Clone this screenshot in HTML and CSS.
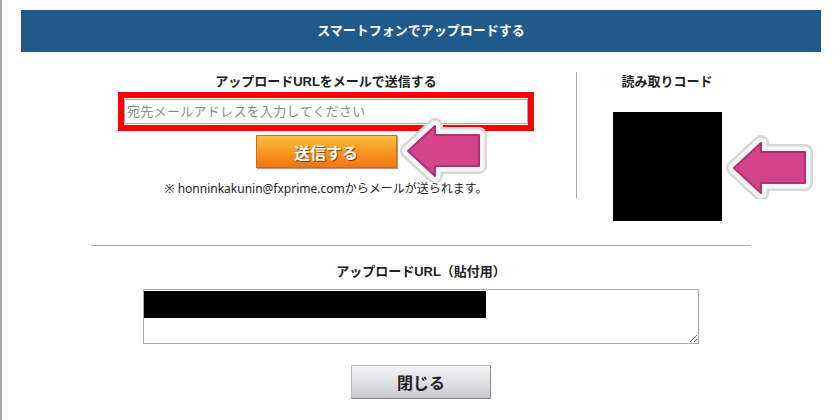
FILE: index.html
```html
<!DOCTYPE html>
<html lang="ja">

<head>
    <meta charset="UTF-8">
    <meta name="viewport" content="width=device-width, initial-scale=1.0">
    <title>スマートフォンでアップロードする</title>
    <link rel="stylesheet" href="styles.css">
</head>

<body>
    <div class="page">
        <div class="panel">
            <div class="panel-header">スマートフォンでアップロードする</div>

            <div class="upload-row">
                <div class="mail-col">
                    <div class="col-title">アップロードURLをメールで送信する</div>
                    <div class="mail-box">
                        <input type="text" class="mail-input" placeholder="宛先メールアドレスを入力してください">
                    </div>
                    <button class="send-btn">送信する</button>
                    <div class="mail-note">※ honninkakunin@fxprime.comからメールが送られます。</div>
                    <svg class="arrow arrow-send" width="88" height="64" viewBox="0 0 88 64">
                        <path d="M8 33 L35 8 L35 17 L79 17 L79 48 L35 48 L35 58 Z" fill="none" stroke="#d6d6d8" stroke-width="16" stroke-linejoin="round"/>
                        <path d="M8 33 L35 8 L35 17 L79 17 L79 48 L35 48 L35 58 Z" fill="none" stroke="#f7f7f7" stroke-width="11" stroke-linejoin="round"/>
                        <path d="M8 33 L35 8 L35 17 L79 17 L79 48 L35 48 L35 58 Z" fill="#d4448a" stroke="#b2306f" stroke-width="2" stroke-linejoin="round"/>
                    </svg>
                </div>

                <div class="qr-col">
                    <div class="col-title">読み取りコード</div>
                    <div class="qr-code"></div>
                    <svg class="arrow arrow-qr" width="88" height="64" viewBox="0 0 88 64">
                        <path d="M8 33 L35 8 L35 17 L79 17 L79 48 L35 48 L35 58 Z" fill="none" stroke="#d6d6d8" stroke-width="16" stroke-linejoin="round"/>
                        <path d="M8 33 L35 8 L35 17 L79 17 L79 48 L35 48 L35 58 Z" fill="none" stroke="#f7f7f7" stroke-width="11" stroke-linejoin="round"/>
                        <path d="M8 33 L35 8 L35 17 L79 17 L79 48 L35 48 L35 58 Z" fill="#d4448a" stroke="#b2306f" stroke-width="2" stroke-linejoin="round"/>
                    </svg>
                </div>
            </div>

            <div class="divider"></div>

            <div class="col-title url-title">アップロードURL（貼付用）</div>
            <div class="url-box">
                <textarea class="url-text" readonly></textarea>
                <div class="url-mask"></div>
            </div>

            <button class="close-btn">閉じる</button>
        </div>
    </div>
</body>

</html>
```

FILE: styles.css
```css
body {
    margin: 0;
    font-family: "Liberation Sans", "Noto Sans CJK JP", sans-serif;
    color: #222;
    background: #fff;
}

.page {
    border-left: 2px solid #a9a9a9;
    padding: 10px 19px 0;
    height: 410px;
}

.panel {
    width: 800px;
}

.panel-header {
    height: 42px;
    line-height: 42px;
    background-color: #1f5a8b;
    color: #fff;
    font-size: 13px;
    font-weight: bold;
    text-align: center;
}

.upload-row {
    display: flex;
    align-items: flex-start;
    padding-left: 55px;
    margin-top: 20px;
}

.col-title {
    font-size: 13px;
    font-weight: bold;
    line-height: 20px;
    text-align: center;
}

.mail-col {
    position: relative;
    width: 500px;
    border-right: 1px solid #a9a9a9;
    display: flex;
    flex-direction: column;
    align-items: center;
}

.mail-box {
    width: 404px;
    border: 6px solid #ff0000;
    padding: 1px 0;
}

.mail-input {
    display: block;
    box-sizing: border-box;
    width: 100%;
    height: 25px;
    margin: 0;
    padding: 0 2px;
    border: 1px solid #a9a9a9;
    font-family: "Liberation Sans", "Noto Sans CJK JP", sans-serif;
    font-size: 13px;
    letter-spacing: 0.3px;
}

.mail-input::placeholder {
    color: #8a8a8a;
}

.send-btn {
    width: 141px;
    height: 33px;
    margin-top: 4px;
    border: 1px solid #d46a12;
    background: linear-gradient(#fcc03f, #f7941f 55%, #f07510);
    color: #fff;
    font-family: "Noto Sans CJK JP", sans-serif;
    font-size: 16px;
    font-weight: bold;
    text-shadow: 1px 1px 1px #7a3a08;
    box-shadow: 1px 1px 1px #b0a090;
    cursor: pointer;
}

.mail-note {
    margin-top: 12px;
    font-family: "Noto Sans", "Noto Sans CJK JP", sans-serif;
    font-size: 12px;
    line-height: 18px;
    color: #222;
}

.qr-col {
    position: relative;
    width: 180px;
    display: flex;
    flex-direction: column;
    align-items: center;
}

.qr-code {
    width: 109px;
    height: 109px;
    margin-top: 20px;
    background: #000;
}

.arrow {
    position: absolute;
}

.arrow-send {
    left: 324px;
    top: 46px;
}

.arrow-qr {
    left: 149px;
    top: 63px;
}

.divider {
    width: 660px;
    margin: 24px auto 0;
    border-top: 1px solid #a9a9a9;
}

.url-title {
    margin-top: 16px;
}

.url-box {
    position: relative;
    width: 556px;
    height: 55px;
    margin: 7px auto 0;
}

.url-text {
    display: block;
    box-sizing: border-box;
    width: 100%;
    height: 100%;
    margin: 0;
    border: 1px solid #a9a9a9;
    resize: both;
}

.url-mask {
    position: absolute;
    left: 1px;
    top: 2px;
    width: 342px;
    height: 27px;
    background: #000;
}

.close-btn {
    display: block;
    width: 140px;
    height: 34px;
    margin: 21px auto 0;
    border: 1px solid #b8b8bc;
    border-bottom-color: #7d7d80;
    border-right-color: #8d8d90;
    background: linear-gradient(#f2f2f4, #dcdde0 60%, #c8c9cd);
    color: #222;
    font-family: "Noto Sans CJK JP", sans-serif;
    font-size: 16px;
    font-weight: bold;
    cursor: pointer;
}
```
